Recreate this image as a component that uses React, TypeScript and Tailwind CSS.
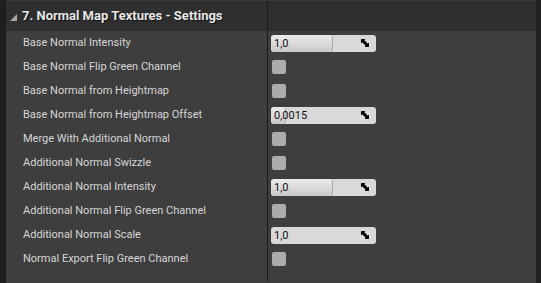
import React from "react";

type Row =
  | { label: string; kind: "check" }
  | { label: string; kind: "num"; value: string; fill: number | null };

const rows: Row[] = [
  { label: "Base Normal Intensity", kind: "num", value: "1,0", fill: 62 },
  { label: "Base Normal Flip Green Channel", kind: "check" },
  { label: "Base Normal from Heightmap", kind: "check" },
  { label: "Base Normal from Heightmap Offset", kind: "num", value: "0,0015", fill: 15 },
  { label: "Merge With Additional Normal", kind: "check" },
  { label: "Additional Normal Swizzle", kind: "check" },
  { label: "Additional Normal Intensity", kind: "num", value: "1,0", fill: 62 },
  { label: "Additional Normal Flip Green Channel", kind: "check" },
  { label: "Additional Normal Scale", kind: "num", value: "1,0", fill: null },
  { label: "Normal Export Flip Green Channel", kind: "check" },
];

function SpinIcon() {
  return (
    <svg width="8" height="8" viewBox="0 0 8 8" className="block">
      <polygon points="0,0 4.5,0 0,4.5" fill="#000" />
      <polygon points="8,8 3.5,8 8,3.5" fill="#000" />
      <line x1="1" y1="1" x2="7" y2="7" stroke="#000" strokeWidth="3" />
    </svg>
  );
}

function NumBox({ value, fill }: { value: string; fill: number | null }) {
  return (
    <div className="relative w-[105px] h-[17px] rounded-[3px] bg-[#d9d9d9] overflow-hidden">
      {fill !== null && (
        <div
          className="absolute left-0 top-0 bottom-0 rounded-[3px] bg-gradient-to-b from-[#ececec] to-[#c8c8c8] border-r border-[#a8a8a8]"
          style={{ width: fill }}
        />
      )}
      <span className="absolute left-[3px] top-0 leading-[17px] text-[11px] text-[#111]">{value}</span>
      <div className="absolute right-[7px] top-[4.5px]">
        <SpinIcon />
      </div>
    </div>
  );
}

export default function App() {
  return (
    <div
      className="w-[541px] h-[283px] flex bg-[#3e3e3e] overflow-hidden"
      style={{ fontFamily: "Roboto, 'Liberation Sans', sans-serif" }}
    >
      <div className="w-[6px] bg-[#1e1e1e]" />
      <div className="flex-1 flex flex-col">
        <div className="h-[31px] flex bg-[#2f2f2f] border-t border-[#3b3b3b]">
          <div className="w-[261px] flex items-center pl-[4px]">
            <svg width="7" height="7" viewBox="0 0 7 7" className="mr-[5px] mt-[2px]">
              <polygon points="7,0 7,7 0,7" fill="#a8a8a8" />
            </svg>
            <span
              className="text-[13px] font-bold text-[#e6e6e6]"
              style={{ textShadow: "1px 1px 0 #111" }}
            >
              7. Normal Map Textures - Settings
            </span>
          </div>
          <div className="flex-1 border-l border-[#1c1c1c]" />
        </div>
        {rows.map((r) => (
          <div key={r.label} className="h-[24px] flex">
            <div className="w-[261px] flex items-center pl-[17px] text-[11px] text-[#d6d6d6]">
              {r.label}
            </div>
            <div className="flex-1 border-l border-[#1c1c1c] flex items-center pl-[3px]">
              {r.kind === "num" ? (
                <NumBox value={r.value} fill={r.fill} />
              ) : (
                <div className="w-[14px] h-[14px] ml-[1px] rounded-[2px] bg-[#ababab]" />
              )}
            </div>
          </div>
        ))}
        <div className="h-[10px] flex">
          <div className="w-[261px]" />
          <div className="flex-1 border-l border-[#1c1c1c]" />
        </div>
      </div>
      <div className="w-[5px] bg-[#222222]" />
    </div>
  );
}
